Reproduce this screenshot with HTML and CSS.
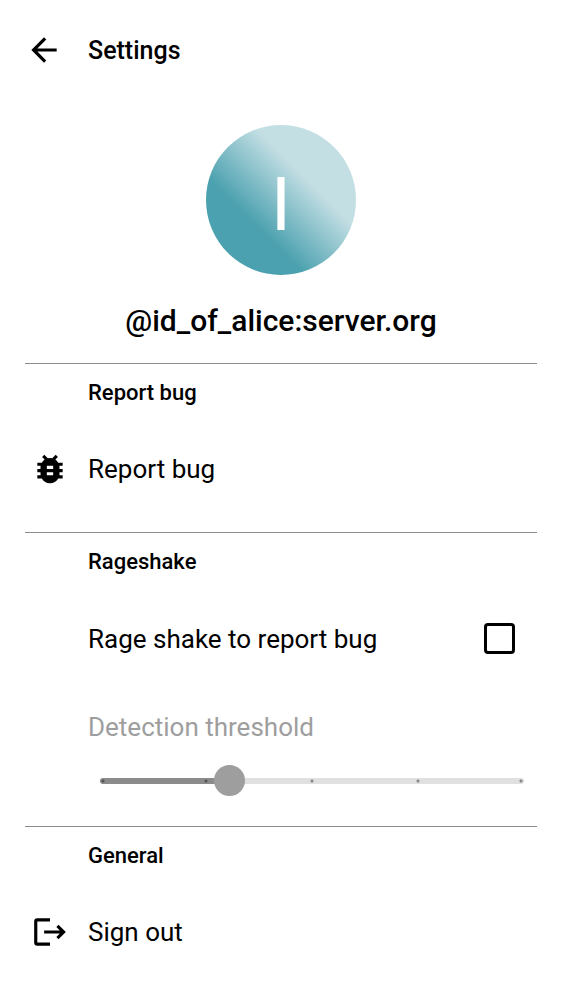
FILE: index.html
```html
<!DOCTYPE html>
<html lang="en">
<head>
<meta charset="utf-8">
<meta name="viewport" content="width=device-width, initial-scale=1">
<title>Settings</title>
<link rel="stylesheet" href="styles.css">
</head>
<body>
<header class="topbar">
  <button class="icon-button" type="button" aria-label="Back">
    <svg class="icon" viewBox="0 0 24 24" aria-hidden="true"><path d="M20 11H7.830l5.590-5.590L12 4l-8 8 8 8 1.410-1.410L7.830 13H20z"/></svg>
  </button>
  <h1 class="title">Settings</h1>
</header>
<main class="content">
  <section class="profile">
    <div class="avatar">I</div>
    <p class="user-id">@id_of_alice:server.org</p>
  </section>
  <section class="group">
    <h2 class="group-title">Report bug</h2>
    <button class="row" type="button">
      <span class="row-icon"><svg class="icon" viewBox="0 0 24 24" aria-hidden="true"><path d="M20 8h-2.810a5.985 5.985 0 0 0-1.820-1.960L17 4.410 15.590 3l-2.170 2.170a6.002 6.002 0 0 0-2.830 0L8.410 3 7 4.410l1.620 1.630C7.880 6.550 7.260 7.220 6.810 8H4v2h2.090c-.050.330-.090.660-.090 1v1H4v2h2v1c0 .340.040.670.090 1H4v2h2.810c1.040 1.790 2.970 3 5.190 3s4.150-1.210 5.190-3H20v-2h-2.090c.050-.330.090-.660.090-1v-1h2v-2h-2v-1c0-.340-.040-.670-.090-1H20V8zm-6 8h-4v-2h4v2zm0-4h-4v-2h4v2z"/></svg></span>
      <span class="row-text">Report bug</span>
    </button>
  </section>
  <section class="group">
    <h2 class="group-title">Rageshake</h2>
    <div class="row row-tall">
      <label class="row-text indent" for="shake">Rage shake to report bug</label>
      <input class="checkbox" id="shake" type="checkbox">
    </div>
    <div class="threshold">
      <label class="threshold-label" for="threshold">Detection threshold</label>
      <input class="slider" id="threshold" type="range" min="0" max="100" step="any" value="29" disabled>
    </div>
  </section>
  <section class="group">
    <h2 class="group-title">General</h2>
    <button class="row" type="button">
      <span class="row-icon"><svg class="icon" viewBox="0 0 24 24" aria-hidden="true"><path d="M17.400 7.400L16 8.800l2.200 2.200H8.300v2h9.900L16 15.200l1.400 1.400 4.600-4.600z"/><path d="M4 5.300h8V3.300H4a2 2 0 0 0-2 2v13.400a2 2 0 0 0 2 2h8v-2H4z"/></svg></span>
      <span class="row-text">Sign out</span>
    </button>
  </section>
</main>
</body>
</html>
```

FILE: styles.css
```css
* {
  box-sizing: border-box;
}

body {
  margin: 0;
  background: #fff;
  color: #000;
  font-family: Roboto, "Noto Sans", sans-serif;
  font-size: 26px;
  line-height: 38px;
}

h1, h2, p {
  margin: 0;
  font-weight: 500;
}

button {
  border: 0;
  background: none;
  color: inherit;
  font: inherit;
  text-align: left;
}

.icon {
  display: block;
  width: 38px;
  height: 38px;
  fill: currentColor;
}

.topbar {
  display: flex;
  align-items: center;
  gap: 7px;
  height: 100px;
  padding: 0 6px;
}

.icon-button {
  display: grid;
  place-items: center;
  width: 75px;
  height: 75px;
  padding: 0;
}

.title {
  padding-top: 2px;
  font-size: 25px;
}

.content {
  padding: 25px 25px 0;
}

.profile {
  display: flex;
  flex-direction: column;
  align-items: center;
  gap: 27px;
  padding-bottom: 23px;
}

.avatar {
  width: 150px;
  height: 150px;
  padding-top: 4px;
  border-radius: 50%;
  background: linear-gradient(45deg, #4ba1af 33%, #c4dfe4 66%);
  color: #fff;
  font-size: 75px;
  line-height: 150px;
  text-align: center;
}

.user-id {
  font-size: 30px;
}

.group {
  padding-bottom: 20px;
  border-top: 1px solid #8c8c90;
}

.group-title {
  padding: 14px 0 17px 63px;
  font-size: 22px;
  line-height: 30px;
}

.row {
  display: flex;
  align-items: center;
  width: 100%;
  height: 87px;
  padding: 0 22px 0 0;
}

.row-tall {
  height: 89px;
}

.row-icon {
  width: 63px;
  padding-left: 6px;
}

.row-text {
  flex: 1;
}

.indent {
  padding-left: 63px;
}

.checkbox {
  appearance: none;
  width: 31px;
  height: 31px;
  margin: 0;
  border: 3px solid #000;
  border-radius: 4px;
}

.threshold {
  padding: 25px 13px 10px 63px;
}

.threshold-label {
  display: block;
  color: #9e9e9e;
}

.slider {
  appearance: none;
  display: block;
  width: calc(100% - 12px);
  height: 31px;
  margin: 19px 0 0 12px;
  background: none;
}

.slider::-webkit-slider-runnable-track {
  height: 6px;
  border-radius: 3px;
  background:
    radial-gradient(circle at 3px 3px, #555 1px, transparent 2px),
    radial-gradient(circle at 25% 3px, #555 1px, transparent 2px),
    radial-gradient(circle at 50% 3px, #888 1px, transparent 2px),
    radial-gradient(circle at 75% 3px, #888 1px, transparent 2px),
    radial-gradient(circle at calc(100% - 3px) 3px, #888 1px, transparent 2px),
    linear-gradient(90deg, #8b8b8b 30%, #e0e0e0 30%);
}

.slider::-webkit-slider-thumb {
  appearance: none;
  width: 31px;
  height: 31px;
  margin-top: -13px;
  border-radius: 50%;
  background: #9e9e9e;
}
```
